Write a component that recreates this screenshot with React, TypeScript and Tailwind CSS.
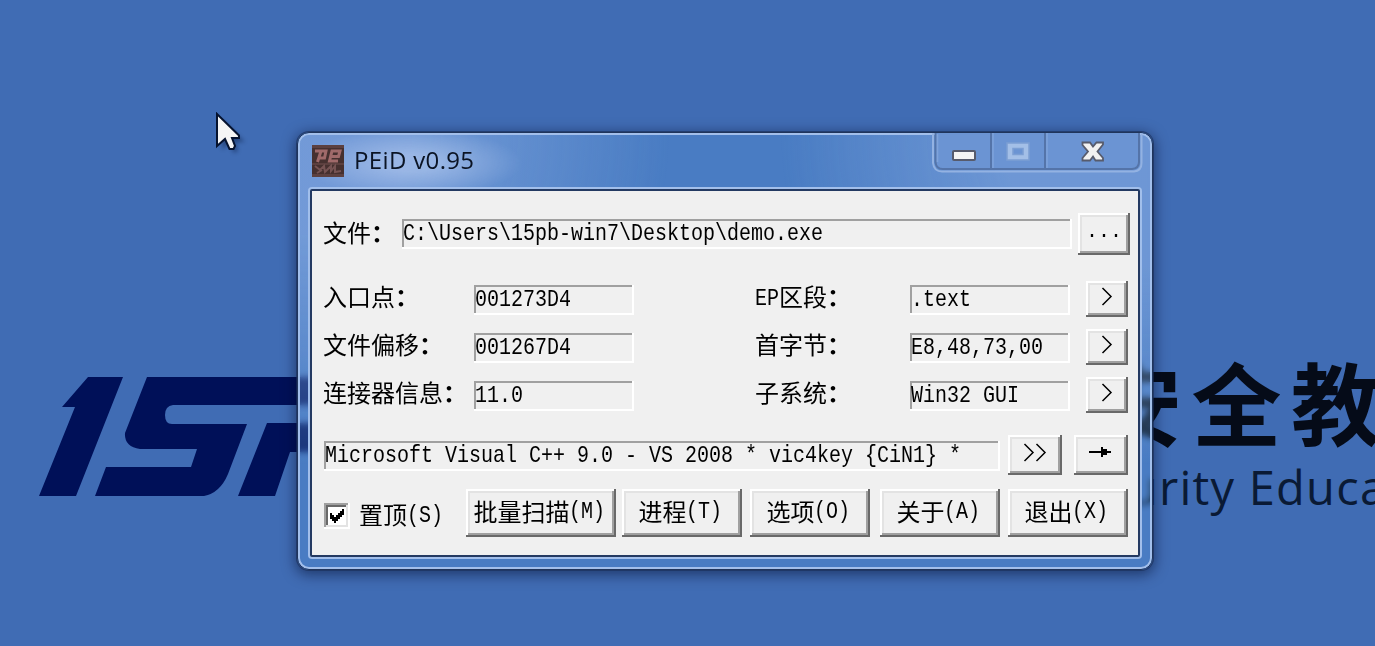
import React from "react";

const fieldFx =
  "shadow-[inset_-2px_-2px_0_#ffffff,inset_2px_2px_0_#a0a0a0]";
const buttonFx =
  "shadow-[inset_-2px_-2px_0_#696969,inset_2px_2px_0_#ffffff,inset_-4px_-4px_0_#a0a0a0,inset_4px_4px_0_#e3e3e3]";

function Latin({ className = "", children }: { className?: string; children: React.ReactNode }) {
  return (
    <span className={`inline-block shrink-0 origin-left scale-x-[0.8333] whitespace-pre text-[24px] ${className}`}>
      {children}
    </span>
  );
}

function Field({ className, children }: { className: string; children: React.ReactNode }) {
  return (
    <div className={`flex h-[30px] shrink-0 items-center pl-px leading-[30px] ${fieldFx} ${className}`}>
      <Latin>{children}</Latin>
    </div>
  );
}

function Button({ className, children }: { className: string; children: React.ReactNode }) {
  return (
    <button className={`flex shrink-0 items-center justify-center whitespace-pre bg-[#f0f0f0] pb-1 leading-6 ${buttonFx} ${className}`}>
      {children}
    </button>
  );
}

function Cjk({ children }: { children: React.ReactNode }) {
  return <span className="font-['Noto_Sans_CJK_SC',sans-serif] text-[24px]">{children}</span>;
}

function Label({ children }: { children: React.ReactNode }) {
  return (
    <Cjk>
      {children}
      <span className="font-bold">：</span>
    </Cjk>
  );
}

function Chevron({ double = false }: { double?: boolean }) {
  return (
    <svg width={double ? 24 : 12} height="20" viewBox={double ? "0 0 24 20" : "0 0 12 20"} fill="none" stroke="#000" strokeWidth="1.500">
      <path d="M1.500 1 10 9.500 1.500 18" />
      {double && <path d="M13.500 1 22 9.500 13.500 18" />}
    </svg>
  );
}

const rows = [
  { left: "入口点", value: "001273D4", latin: "EP", right: "区段", info: ".text" },
  { left: "文件偏移", value: "001267D4", latin: "", right: "首字节", info: "E8,48,73,00" },
  { left: "连接器信息", value: "11.0", latin: "", right: "子系统", info: "Win32 GUI" },
];

const actions = [
  { name: "批量扫描", key: "(M)", size: "w-[150px] mr-1.5" },
  { name: "进程", key: "(T)", size: "w-[120px] mr-2" },
  { name: "选项", key: "(O)", size: "w-[120px] mr-2.5" },
  { name: "关于", key: "(A)", size: "w-[120px] mr-2" },
  { name: "退出", key: "(X)", size: "w-[120px]" },
];

function Wallpaper() {
  return (
    <svg className="absolute inset-0" width="1375" height="646" viewBox="0 0 1375 646">
      <g fill="#001058">
        <path d="M88 377H123L76 496H39L75 407H62Z" />
        <path d="M147 377H420V405H173Q165 406 165 415Q165 424 172 424H247L228 474Q220 493 204 496H95L106 467H191L197 449H140Q124 447 125 433Z" />
        <path d="M267 423H420V452H290L275 496H238Z" />
      </g>
      <g fill="#050b18">
        <text x="1092" y="439" className="font-['Noto_Sans_CJK_SC',sans-serif] text-[90px] font-bold tracking-[9.5px]">安全教</text>
        <text x="1129" y="505" textLength="257" className="font-['Open_Sans',sans-serif] text-[47px]" fill="#0a1a35">urity Educa</text>
      </g>
    </svg>
  );
}

function AppIcon() {
  return (
    <svg width="32" height="32" viewBox="0 0 32 32">
      <rect width="32" height="32" fill="#46302f" />
      <path d="M0 0H32V3H0ZM0 18H32V20H0ZM0 29H32V32H0Z" fill="#5c403f" />
      <g fill="none" stroke="#a06a6a" strokeWidth="3">
        <path d="M3 6H14L12.500 13H8M9 6 5.500 17" />
        <path d="M18 11.500H26.500L28 6H20L17.500 16H26" />
      </g>
      <path d="M3 21 8 25 12 21 13 27 19 21V26L23 21V27L29 26M5 28 10 25" fill="none" stroke="#765353" strokeWidth="2" />
    </svg>
  );
}

function Caption() {
  return (
    <svg width="212" height="42" viewBox="0 0 212 42">
      <path d="M1 0V30Q2 38.500 10 38.500H202Q209.500 38 209.500 30V0" fill="none" stroke="#93b2e2" strokeWidth="2" />
      <path d="M3.500 0V29Q4 36 11 36H200Q207 35.500 207 29V0" fill="#6b94d3" stroke="#5474a9" strokeWidth="2" />
      <path d="M59 0V35M113 0V35" stroke="#5474a9" strokeWidth="2" />
      <path d="M61 0V35M115 0V35M5.500 1V29" stroke="#7fa3db" strokeWidth="1.500" />
      <rect x="21" y="18" width="22" height="9" rx="1" fill="#f4f4f4" stroke="#575b6c" strokeWidth="2" />
      <path d="M75 10H97V27H75ZM81 15.500V21.500H91V15.500Z" fillRule="evenodd" fill="#a3bfe7" stroke="#7c9fd4" strokeWidth="1.500" />
      <path d="M150.500 9.500H158L161 13.500 164.500 9.500H171V11.500L165.500 18.500 171 25V27.500H163.500L161 23.500 158 27.500H150.500V25L156 18.500 150.500 12Z" fill="#f1f1f1" stroke="#575b6c" strokeWidth="1.800" />
    </svg>
  );
}

export default function App() {
  return (
    <main className="relative h-[646px] w-[1375px] overflow-hidden bg-[#406cb4]">
      <Wallpaper />
      <section className="absolute left-[297px] top-[132px] h-[438px] w-[856px] rounded-[12px] border border-[#20355b] bg-[#6ebeff]/20 p-[2px] shadow-[inset_0_0_0_2px_#a2bfeb,0_0_0_1px_rgba(25,45,85,0.6),0_3px_13px_2px_rgba(0,10,40,0.5)] backdrop-blur-[3px]">
        <div className="flex h-full flex-col rounded-[9px] bg-[radial-gradient(ellipse_370px_330px_at_0_0,rgba(165,192,240,0.45)_30%,transparent),radial-gradient(ellipse_370px_330px_at_100%_0,rgba(165,192,240,0.4)_40%,transparent)] pl-[10px]">
          <header className="flex h-[54px] shrink-0 items-start justify-between bg-[radial-gradient(ellipse_110px_34px_at_102px_28px,rgba(185,205,240,0.55)_25%,transparent)]">
            <div className="flex items-center gap-[10px] pl-[2px] pt-[10px]">
              <AppIcon />
              <h1 className="relative -top-px font-['Open_Sans',sans-serif] text-[24px] leading-8 tracking-[0.35px] text-[#0b1424]">PEiD v0.95</h1>
            </div>
            <div className="-mt-[2px] pr-[6px]"><Caption /></div>
          </header>
          <div className="h-[368px] w-[830px] rounded-[2px] border-2 border-[#243a62] bg-[#f0f0f0] font-['Liberation_Mono',monospace] text-[20px] leading-6 text-black shadow-[0_0_0_2px_#a2bfeb]">
            <div className="flex h-[64px] items-start pl-[11px] pt-[22px]">
              <span className="mt-[7px] w-[79px] shrink-0"><Label>文件</Label></span>
              <Field className="mr-1.5 mt-[6px] w-[670px]">C:\Users\15pb-win7\Desktop\demo.exe</Field>
              <Button className="h-[42px] w-[52px]">...</Button>
            </div>
            <div className="flex flex-col gap-3 pt-[26px]">
              {rows.map((row) => (
                <div key={row.value} className="flex h-9 items-center pl-[11px]">
                  <span className="w-[151px] shrink-0 whitespace-nowrap pb-[2px]"><Label>{row.left}</Label></span>
                  <Field className="mt-[2px] w-[160px]">{row.value}</Field>
                  <span className="ml-[121px] flex h-6 w-[155px] shrink-0 items-center whitespace-nowrap">
                    {row.latin && <Latin className="-mr-[4.8px] -mt-px">{row.latin}</Latin>}
                    <span className="-mt-[2px]"><Label>{row.right}</Label></span>
                  </span>
                  <Field className="mr-4 mt-[2px] w-[160px]">{row.info}</Field>
                  <Button className="h-9 w-[42px]"><Chevron /></Button>
                </div>
              ))}
            </div>
            <div className="mt-[22px] flex h-10 items-center pl-3">
              <Field className="mr-2 mt-[2px] w-[676px]">{"Microsoft Visual C++ 9.0 - VS 2008 * vic4key {CiN1} *"}</Field>
              <Button className="mr-3 h-10 w-[54px]"><Chevron double /></Button>
              <Button className="h-10 w-[54px]">
                <svg width="24" height="12" viewBox="0 0 24 12"><path d="M0 4H12V0H14V2H18V4H22V6H18V8H14V10H12V6H0Z" /></svg>
              </Button>
            </div>
            <div className="mt-3.5 flex h-12 items-center pl-3">
              <span className="mr-[9px] mt-[6px] flex h-[26px] w-[26px] items-center justify-center bg-white shadow-[inset_-2px_-2px_0_#ffffff,inset_2px_2px_0_#a0a0a0,inset_-4px_-4px_0_#e3e3e3,inset_4px_4px_0_#696969]">
                <svg width="14" height="14" viewBox="0 0 14 14"><path d="M0 4H2V6H4V8H6V6H8V4H10V2H12V0H14V6H12V8H10V10H8V12H6V14H4V12H2V10H0Z" /></svg>
              </span>
              <span className="mt-[2px] flex w-[107px] shrink-0 items-center whitespace-nowrap"><Cjk>置顶</Cjk><Latin className="-mr-[7.2px] mt-[3px]">(S)</Latin></span>
              {actions.map((action) => (
                <Button key={action.key} className={`h-12 pr-[3px] ${action.size}`}>
                  <Cjk>{action.name}</Cjk>
                  <Latin className="-mr-[7.2px] mt-[2px]">{action.key}</Latin>
                </Button>
              ))}
            </div>
          </div>
        </div>
      </section>
      <svg className="absolute left-[215px] top-[112px]" width="36" height="46" viewBox="0 0 36 46">
        <path d="M5 6V36L12 29 17 39 21 37 18 28H28Z" transform="translate(2 2)" fill="#001030" className="opacity-40 blur-[2px]" />
        <path d="M2 2V34L10 27 14.500 37H18.500L20 34 17 26H24V23.500Z" fill="#f5f5f5" stroke="#06132f" strokeWidth="2" />
      </svg>
    </main>
  );
}
